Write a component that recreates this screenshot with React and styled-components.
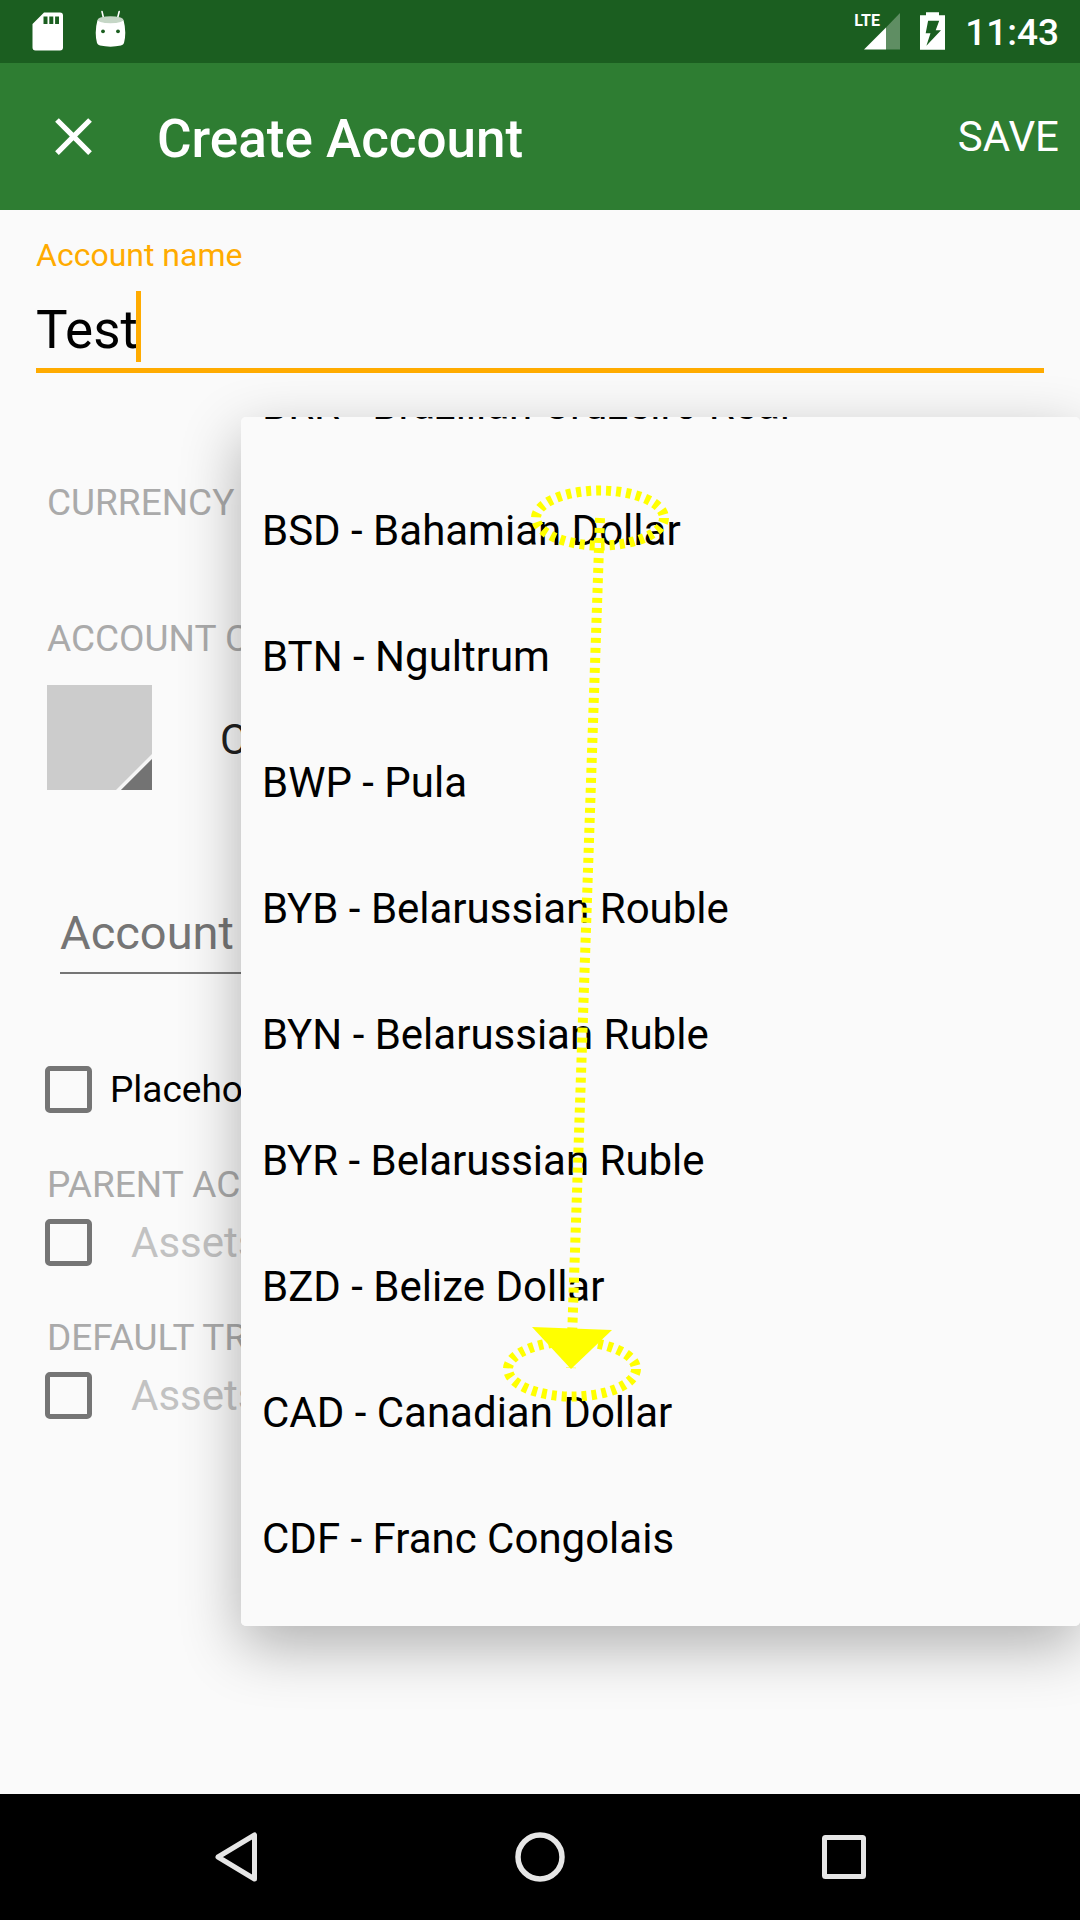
import React from "react";
import styled, { createGlobalStyle } from "styled-components";
import { MdClose } from "react-icons/md";

const GlobalStyle = createGlobalStyle`
  *, *::before, *::after { box-sizing: border-box; }
  body {
    margin: 0;
    background: #fafafa;
    color: #000;
    font-family: Roboto, "Liberation Sans", sans-serif;
  }
  button, input, select {
    margin: 0;
    padding: 0;
    border: 0;
    border-radius: 0;
    outline: none;
    background: none;
    color: inherit;
    font: inherit;
    appearance: none;
  }
  svg { display: block; flex: none; }
`;

const Screen = styled.div`
  display: flex;
  flex-direction: column;
  min-height: 100vh;
  overflow: hidden;
`;

const StatusBar = styled.div`
  display: flex;
  align-items: center;
  justify-content: space-between;
  height: 63px;
  padding: 0 21px 0 32px;
  background: #1b5e20;
  color: #fff;
`;

const StatusGroup = styled.div`
  display: flex;
  align-items: center;
  gap: ${(p) => p.$gap}px;
`;

const Signal = styled.div`
  position: relative;
`;

const NetworkTag = styled.span`
  position: absolute;
  top: 12px;
  left: -1px;
  font-size: 16px;
  line-height: 18px;
  font-weight: 700;
`;

const Clock = styled.time`
  padding-top: 2px;
  font-size: 37px;
  line-height: 44px;
  font-weight: 500;
`;

const AppBar = styled.header`
  display: flex;
  align-items: center;
  height: 147px;
  padding: 0 21px 0 42px;
  background: #2e7d32;
  color: #fff;
`;

const Title = styled.h1`
  flex: 1;
  margin: 0;
  padding: 4px 0 0 52px;
  font-size: 53px;
  line-height: 60px;
  font-weight: 500;
`;

const BarButton = styled.button`
  font-size: 42px;
  line-height: 50px;
`;

const Form = styled.main`
  position: relative;
  display: flex;
  flex: 1;
  flex-direction: column;
  padding: 27px 36px 0;
`;

const NameField = styled.div`
  position: relative;
  display: flex;
  flex-direction: column;
  gap: 18px;
  color: #ffab00;
`;

const NameLabel = styled.label`
  font-size: 32px;
  line-height: 36px;
`;

const NameInput = styled.input`
  width: 100%;
  height: 82px;
  border-bottom: 5px solid #ffab00;
  color: #000;
  font-size: 53px;
`;

const Caret = styled.span`
  position: absolute;
  left: 100px;
  bottom: 11px;
  width: 5px;
  height: 71px;
  background: #ffab00;
`;

const Section = styled.section`
  display: flex;
  flex-direction: column;
  gap: ${(p) => p.$gap || 0}px;
  margin-top: ${(p) => p.$top}px;
  padding-left: 11px;
`;

const SectionTitle = styled.h2`
  margin: 0;
  color: #aaa;
  font-size: 37px;
  line-height: 44px;
  font-weight: 400;
  white-space: nowrap;
`;

const ColorRow = styled.div`
  display: flex;
  align-items: center;
  gap: 68px;
`;

const TypeSelect = styled.select`
  flex: 1;
  height: 105px;
  padding-top: 4px;
  color: #212121;
  font-size: 42px;
`;

const DescriptionInput = styled.input`
  height: 79px;
  margin: 105px 24px 0;
  padding-bottom: 2px;
  border-bottom: 2px solid #757575;
  font-size: 47px;
  &::placeholder { color: #757575; opacity: 1; }
`;

const CheckRow = styled.div`
  display: flex;
  align-items: center;
  gap: ${(p) => p.$gap}px;
  height: 48px;
  margin-top: ${(p) => p.$top}px;
  padding-left: 9px;
`;

const CheckBox = styled.input`
  flex: none;
  width: 47px;
  height: 47px;
  border: 5px solid #757575;
  border-radius: 5px;
`;

const CheckLabel = styled.label`
  padding-top: 2px;
  font-size: 37px;
  line-height: 44px;
`;

const AccountSelect = styled.select`
  flex: 1;
  height: 48px;
  padding-bottom: 2px;
  color: #c2c2c2;
  font-size: 42px;
  opacity: 1;
`;

const CurrencyMenu = styled.ul`
  position: absolute;
  top: 207px;
  left: 241px;
  right: 0;
  display: flex;
  flex-direction: column;
  justify-content: flex-end;
  height: 1209px;
  margin: 0;
  padding: 0 0 25px;
  overflow: hidden;
  border-radius: 5px;
  background: #fafafa;
  list-style: none;
`;

const MenuShadow = styled.div`
  position: absolute;
  top: 207px;
  left: 241px;
  right: 0;
  height: 1209px;
  border-radius: 5px;
  box-shadow: 0 20px 60px rgba(0, 0, 0, 0.3);
`;

const MenuItem = styled.li`
  flex: none;
  height: 126px;
`;

const MenuButton = styled.button`
  width: 100%;
  height: 100%;
  padding: 0 21px;
  font-size: 42px;
  text-align: left;
`;

const Gesture = styled.svg`
  position: absolute;
  top: 207px;
  left: 241px;
  pointer-events: none;
`;

const NavBar = styled.nav`
  display: grid;
  grid-template-columns: repeat(3, 1fr);
  height: 126px;
  padding: 0 84px;
  background: #000;
`;

const NavButton = styled.button`
  display: grid;
  place-items: center;
`;

const currencies = [
  "BRR - Brazilian Cruzeiro Real",
  "BSD - Bahamian Dollar",
  "BTN - Ngultrum",
  "BWP - Pula",
  "BYB - Belarussian Rouble",
  "BYN - Belarussian Ruble",
  "BYR - Belarussian Ruble",
  "BZD - Belize Dollar",
  "CAD - Canadian Dollar",
  "CDF - Franc Congolais",
];

const SdCardIcon = () => (
  <svg width="31" height="63" viewBox="32 0 31 63">
    <path
      fill="#fff"
      fillRule="evenodd"
      d="M44 12.5H60a3 3 0 0 1 3 3V47.500a3 3 0 0 1-3 3H35.500a3 3 0 0 1-3-3V24ZM43.500 16.500V24H47.500V16.500ZM49.300 16.500V24H53.300V16.500ZM55.100 16.500V24H59V16.500Z"
    />
  </svg>
);

const AndroidIcon = () => (
  <svg width="31" height="63" viewBox="95 0 31 63">
    <path d="M102 11.500L103.500 18M119.200 11.500L117.600 18" stroke="#fff" strokeWidth="1.600" strokeLinecap="round" />
    <path
      fill="#fff"
      d="M97.500 20Q110.500 26 123.500 20Q126.800 32 124 43Q123.500 44.800 121 45.500Q110.500 47.800 100 45.500Q97.500 44.800 97 43Q94.200 32 97.500 20Z"
    />
    <ellipse cx="110.500" cy="19.700" rx="12.800" ry="3.500" fill="#c5d6c6" />
    <circle cx="103" cy="31.300" r="1.900" fill="#1b5e20" />
    <circle cx="118" cy="31.300" r="1.900" fill="#1b5e20" />
  </svg>
);

const SignalIcon = () => (
  <svg width="45" height="63" viewBox="855 0 45 63">
    <path d="M886 27.500L900 13V49.500H886Z" fill="#fff" opacity="0.3" />
    <path d="M864 49.500L886 27.500V49.500Z" fill="#fff" />
  </svg>
);

const BatteryIcon = () => (
  <svg width="25" height="63" viewBox="922 0 25 63">
    <path
      fill="#fff"
      fillRule="evenodd"
      d="M928 12.300H941V15.200H947V49.800H922V15.200H928ZM930.100 20.800H941.200L937.700 30.200H943L928.400 45.700L932.500 33.300H927.700Z"
    />
  </svg>
);

const ColorSwatch = () => (
  <svg width="105" height="105" viewBox="0 0 105 105">
    <path d="M0 0H105V105H0Z" fill="#ccc" />
    <path d="M105 69V74L74 105H69Z" fill="#f5f5f5" />
    <path d="M105 74V105H74Z" fill="#737373" />
  </svg>
);

const SwipeTrace = () => (
  <Gesture width="839" height="1209" viewBox="241 417 839 1209" aria-hidden="true">
    <g fill="none" stroke="#ff0" strokeWidth="10" strokeDasharray="5 5">
      <ellipse cx="600" cy="518" rx="64" ry="27.500" />
      <ellipse cx="572" cy="1369" rx="64" ry="27.500" />
      <path d="M600 518L571 1368" />
    </g>
    <path d="M532 1327L612 1330L571 1369Z" fill="#ff0" />
    <path d="M596 543H601V548H596Z" fill="#fafafa" />
  </Gesture>
);

export default function App() {
  return (
    <Screen>
      <GlobalStyle />
      <StatusBar>
        <StatusGroup $gap={32}>
          <SdCardIcon />
          <AndroidIcon />
        </StatusGroup>
        <StatusGroup $gap={20}>
          <Signal>
            <NetworkTag>LTE</NetworkTag>
            <SignalIcon />
          </Signal>
          <BatteryIcon />
          <Clock>11:43</Clock>
        </StatusGroup>
      </StatusBar>

      <AppBar>
        <BarButton type="button" aria-label="Close">
          <MdClose size={63} />
        </BarButton>
        <Title>Create Account</Title>
        <BarButton type="button">SAVE</BarButton>
      </AppBar>

      <Form>
        <NameField>
          <NameLabel htmlFor="name">Account name</NameLabel>
          <NameInput id="name" type="text" defaultValue="Test" />
          <Caret />
        </NameField>

        <Section $top={108}>
          <SectionTitle>CURRENCY</SectionTitle>
        </Section>

        <Section $top={92} $gap={24}>
          <SectionTitle>ACCOUNT COLOR &amp; TYPE</SectionTitle>
          <ColorRow>
            <button type="button" aria-label="Account color">
              <ColorSwatch />
            </button>
            <TypeSelect aria-label="Account type" defaultValue="CASH">
              <option>CASH</option>
            </TypeSelect>
          </ColorRow>
        </Section>

        <DescriptionInput type="text" aria-label="Account description" placeholder="Account description" />

        <CheckRow $top={91} $gap={18}>
          <CheckBox id="placeholder" type="checkbox" />
          <CheckLabel htmlFor="placeholder">Placeholder account</CheckLabel>
        </CheckRow>

        <Section $top={50}>
          <SectionTitle>PARENT ACCOUNT</SectionTitle>
        </Section>
        <CheckRow $top={11} $gap={39}>
          <CheckBox type="checkbox" aria-label="Use parent account" />
          <AccountSelect aria-label="Parent account" disabled>
            <option>Assets</option>
          </AccountSelect>
        </CheckRow>

        <Section $top={50}>
          <SectionTitle>DEFAULT TRANSFER ACCOUNT</SectionTitle>
        </Section>
        <CheckRow $top={11} $gap={39}>
          <CheckBox type="checkbox" aria-label="Use default transfer account" />
          <AccountSelect aria-label="Default transfer account" disabled>
            <option>Assets</option>
          </AccountSelect>
        </CheckRow>

        <MenuShadow />
        <CurrencyMenu aria-label="Currency">
          {currencies.map((currency) => (
            <MenuItem key={currency}>
              <MenuButton type="button">{currency}</MenuButton>
            </MenuItem>
          ))}
        </CurrencyMenu>
        <SwipeTrace />
      </Form>

      <NavBar>
        <NavButton type="button" aria-label="Back">
          <svg width="52" height="52" viewBox="210 1831 52 52">
            <path d="M218 1857L254.500 1835V1879Z" fill="none" stroke="#e6e6e6" strokeWidth="5" strokeLinejoin="round" />
          </svg>
        </NavButton>
        <NavButton type="button" aria-label="Home">
          <svg width="52" height="52" viewBox="0 0 52 52">
            <circle cx="26" cy="26" r="22" fill="none" stroke="#e6e6e6" strokeWidth="5.500" />
          </svg>
        </NavButton>
        <NavButton type="button" aria-label="Recent apps">
          <svg width="52" height="52" viewBox="0 0 52 52">
            <rect x="6.500" y="6.500" width="39" height="39" rx="1" fill="none" stroke="#e6e6e6" strokeWidth="5" />
          </svg>
        </NavButton>
      </NavBar>
    </Screen>
  );
}
